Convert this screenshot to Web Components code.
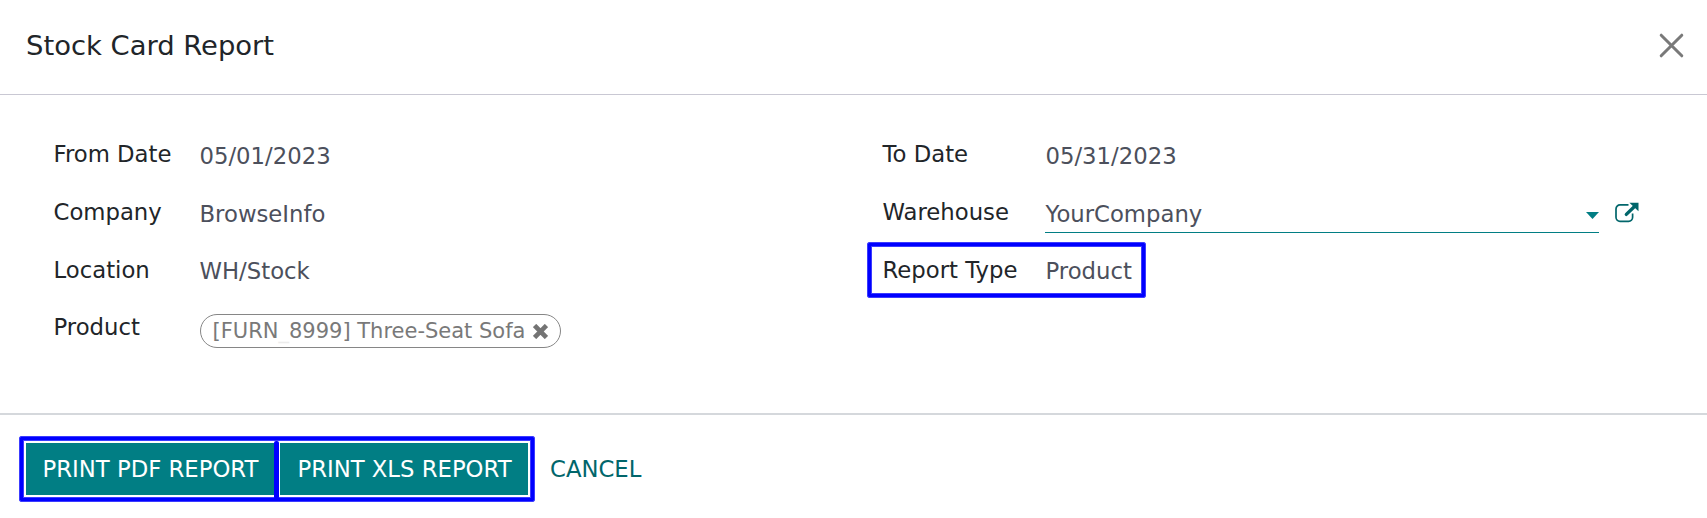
<!DOCTYPE html>
<html lang="en">
<head>
<meta charset="utf-8">
<title>Stock Card Report</title>
<style>
body { margin: 0; background: #fff; font-family: "DejaVu Sans", sans-serif; }
</style>
</head>
<body>
<report-dialog></report-dialog>
<script>
const define = (name, html) => {
  const template = document.createElement('template');
  template.innerHTML = html;
  customElements.define(name, class extends HTMLElement {
    constructor() {
      super();
      this.attachShadow({ mode: 'open' }).append(template.content.cloneNode(true));
    }
  });
};

define('dialog-header', `
<style>
:host { display: flex; box-sizing: border-box; height: 95px; padding: 0 23px 0 26px; align-items: center; justify-content: space-between; border-bottom: 1px solid #c9c8d3; }
h4 { margin: 0; padding-bottom: 3px; font-size: 27.4px; line-height: 40px; font-weight: 400; color: #212529; }
svg { display: block; margin: 0 0 3px; }
</style>
<h4><slot></slot></h4>
<svg width="25" height="25" viewBox="0 0 25 25"><path d="M2.2 2.2 22.8 22.8M22.8 2.2 2.2 22.8" stroke="#797979" stroke-width="3" stroke-linecap="round"/></svg>
`);

define('form-row', `
<style>
:host { display: flex; position: relative; height: var(--row, 58px); font-size: 22.75px; line-height: 34px; white-space: nowrap; }
.label { width: var(--label-width, 146px); flex: none; color: #212529; }
.value { flex: 1; min-width: 0; margin-top: var(--drop, 2px); color: #4c505c; }
:host([marked])::after { content: ""; position: absolute; left: -15.5px; top: -11px; box-sizing: border-box; width: 279px; height: 56px; border: 1px solid #3c3cff; box-shadow: inset 0 0 0 3px #00f, inset 0 0 0 4px #3c3cff; border-radius: 2px; }
</style>
<div class="label"><slot name="label"></slot></div>
<div class="value"><slot></slot></div>
`);

define('record-select', `
<style>
:host { display: flex; margin-left: -.5px; }
.input { display: flex; justify-content: space-between; box-sizing: border-box; width: 554px; height: 36px; padding-left: .5px; border-bottom: 1px solid #017e84; }
.caret { margin: 15px 0 0; display: block; }
.open { display: block; margin: 4px 0 0 16px; }
</style>
<div class="input"><slot></slot><svg class="caret" width="13" height="7"><path d="M0 0H13L6.5 7Z" fill="#017e84"/></svg></div>
<svg class="open" width="24" height="22" viewBox="0 0 24 22" fill="none"><path d="M13.500 3.900H5a4 4 0 0 0-4 4V16.300a4 4 0 0 0 4 4H13.600a4 4 0 0 0 4-4V12.500" stroke="#01666b" stroke-width="1.700"/><path d="M11.300 13.400 19 6" stroke="#01666b" stroke-width="3.300" stroke-linecap="round"/><path d="M14.400 1.800H23.500V10.200Z" fill="#01666b"/></svg>
`);

define('record-tag', `
<style>
:host { display: inline-flex; box-sizing: border-box; height: 34px; margin-left: .5px; padding: 0 11.5px; border: 1px solid #868686; border-radius: 17px; align-items: center; font-size: 21px; line-height: 30px; color: #797979; vertical-align: top; }
svg { display: block; margin-left: 8px; }
</style>
<span><slot></slot></span>
<svg width="15" height="15" viewBox="0 0 15 15"><path d="M3.200 3.200 11.800 11.800M11.800 3.200 3.200 11.800" stroke="#747474" stroke-width="4.700" stroke-linecap="square" stroke-linejoin="round"/></svg>
`);

define('action-button', `
<style>
:host { display: block; }
button { display: block; box-sizing: border-box; width: 248px; height: 52px; margin: 0; border: 0; background: #017e84; color: #fff; font-family: inherit; font-size: 22.75px; line-height: 48px; padding: 0 0 1px 1px; white-space: nowrap; }
:host([link]) button { width: auto; background: none; color: #01666b; }
</style>
<button><slot></slot></button>
`);

define('dialog-footer', `
<style>
:host { display: flex; box-sizing: border-box; height: 105px; padding: 28px 26px; border-top: 2px solid #d5d8dc; align-items: flex-start; }
.group { display: flex; position: relative; gap: 6px; margin-right: 21px; }
.group::before { content: ""; position: absolute; inset: -7px; border: 1px solid #3c3cff; box-shadow: inset 0 0 0 3px #00f, inset 0 0 0 4px #3c3cff; border-radius: 2px; }
.group::after { content: ""; position: absolute; left: 248px; top: -2px; width: 5px; height: 58px; background: #00f; border-radius: 2px; }
</style>
<div class="group"><slot></slot></div>
<slot name="secondary"></slot>
`);

define('report-dialog', `
<style>
:host { display: block; height: 518px; overflow: hidden; }
main { display: grid; grid-template-columns: 829px 1fr; box-sizing: border-box; height: 318px; padding: 42px 0 0 53.5px; }
.right { --label-width: 163px; }
.tag { --drop: 4px; }
i { font-style: normal; color: #ececec; }
</style>
<dialog-header>Stock Card Report</dialog-header>
<main>
  <section>
    <form-row><span slot="label">From Date</span>05/01/2023</form-row>
    <form-row><span slot="label">Company</span>BrowseInfo</form-row>
    <form-row style="--row:57px;--drop:1px"><span slot="label">Location</span>WH/Stock</form-row>
    <form-row class="tag"><span slot="label">Product</span><record-tag>[FURN<i>_</i>8999] Three-Seat Sofa</record-tag></form-row>
  </section>
  <section class="right">
    <form-row><span slot="label">To Date</span>05/31/2023</form-row>
    <form-row><span slot="label">Warehouse</span><record-select>YourCompany</record-select></form-row>
    <form-row marked style="--row:57px;--drop:1px"><span slot="label">Report Type</span>Product</form-row>
  </section>
</main>
<dialog-footer>
  <action-button>PRINT PDF REPORT</action-button>
  <action-button>PRINT XLS REPORT</action-button>
  <action-button link slot="secondary">CANCEL</action-button>
</dialog-footer>
`);
</script>
</body>
</html>
